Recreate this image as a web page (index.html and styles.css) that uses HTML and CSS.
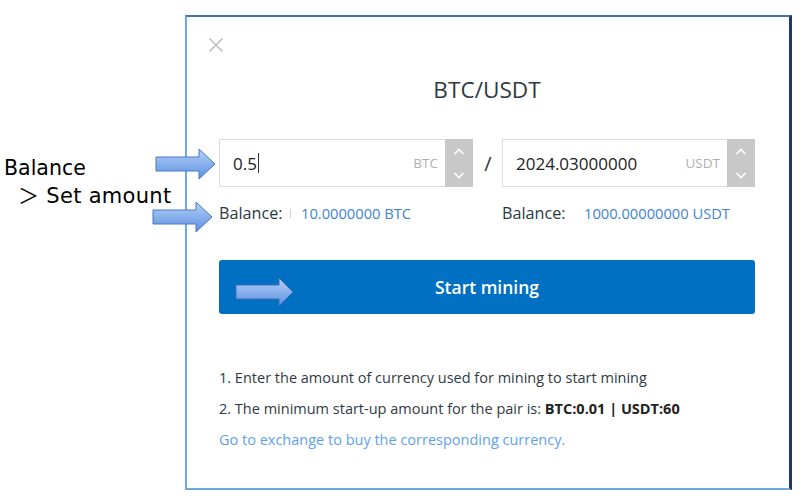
FILE: index.html
```html
<!DOCTYPE html>
<html lang="en">
<head>
<meta charset="utf-8">
<title>BTC/USDT</title>
<link rel="stylesheet" href="styles.css">
</head>
<body>
<div class="page">
  <div class="annot-text">
    <div class="annot-line">Balance</div>
    <div class="annot-line annot-indent"><span class="gt">＞</span> Set amount</div>
  </div>
  <svg class="arrow arrow-1" width="62" height="32" viewBox="0 0 62 32"><defs><linearGradient id="ag1" x1="0" y1="0" x2="0" y2="1"><stop offset="0" stop-color="#b5d2f8"/><stop offset="1" stop-color="#5c8fe0"/></linearGradient></defs><path d="M1 9 H44 V1 L60 16 L44 31 V23 H1 Z" fill="url(#ag1)" stroke="#4a79c6" stroke-width="1"/></svg>
  <svg class="arrow arrow-2" width="62" height="32" viewBox="0 0 62 32"><defs><linearGradient id="ag2" x1="0" y1="0" x2="0" y2="1"><stop offset="0" stop-color="#b5d2f8"/><stop offset="1" stop-color="#5c8fe0"/></linearGradient></defs><path d="M1 9 H44 V1 L60 16 L44 31 V23 H1 Z" fill="url(#ag2)" stroke="#4a79c6" stroke-width="1"/></svg>
  <svg class="arrow arrow-3" width="60" height="32" viewBox="0 0 60 32"><defs><linearGradient id="ag3" x1="0" y1="0" x2="0" y2="1"><stop offset="0" stop-color="#b5d2f8"/><stop offset="1" stop-color="#5c8fe0"/></linearGradient></defs><path d="M1 8 H44 V1 L58 15 L44 29 V22 H1 Z" fill="url(#ag3)" stroke="#3f6db5" stroke-width="1"/></svg>

  <div class="dialog">
    <button class="close" aria-label="Close"><svg width="16" height="16" viewBox="0 0 16 16"><path d="M1.5 1.5 L14.5 14.5 M14.5 1.5 L1.5 14.5" stroke="#bdbdbd" stroke-width="1.6" fill="none"/></svg></button>
    <h1 class="title">BTC/USDT</h1>
    <div class="pair">
      <div class="field">
        <div class="field-input"><span class="val">0.5</span><span class="caret"></span><span class="unit">BTC</span></div>
        <div class="spin"><svg width="28" height="46" viewBox="0 0 28 46"><path d="M9.5 14 L14 9.5 L18.5 14" stroke="#fff" stroke-width="1.6" fill="none"/><path d="M9.5 33 L14 37.5 L18.5 33" stroke="#fff" stroke-width="1.6" fill="none"/></svg></div>
      </div>
      <span class="slash">/</span>
      <div class="field">
        <div class="field-input"><span class="val">2024.03000000</span><span class="unit">USDT</span></div>
        <div class="spin"><svg width="28" height="46" viewBox="0 0 28 46"><path d="M9.5 14 L14 9.5 L18.5 14" stroke="#fff" stroke-width="1.6" fill="none"/><path d="M9.5 33 L14 37.5 L18.5 33" stroke="#fff" stroke-width="1.6" fill="none"/></svg></div>
      </div>
      <div class="bal"><span class="lbl">Balance:</span><span class="tick"></span><span class="amt">10.0000000 BTC</span></div>
      <span></span>
      <div class="bal"><span class="lbl">Balance:</span><span class="amt">1000.00000000 USDT</span></div>
    </div>
    <button class="start">Start mining</button>
    <div class="notes">
      <p>1. Enter the amount of currency used for mining to start mining</p>
      <p>2. The minimum start-up amount for the pair is: <b>BTC:0.01 | USDT:60</b></p>
      <p><a class="link" href="#">Go to exchange to buy the corresponding currency.</a></p>
    </div>
  </div>
</div>
</body>
</html>
```

FILE: styles.css
```css
* { box-sizing: border-box; }
html, body { margin: 0; padding: 0; background: #fff; }
body { font-family: "Open Sans", "Noto Sans", sans-serif; color: #303a44; }

.page {
  position: relative;
  width: 799px;
  height: 500px;
  padding: 15px 0 0 185px;
}

.annot-text {
  position: absolute;
  left: 4px;
  top: 155px;
  font-family: "DejaVu Sans", "Noto Sans CJK JP", sans-serif;
  font-size: 20.5px;
  line-height: 26px;
  color: #000;
}
.annot-indent { padding-left: 14px; font-size: 21px; letter-spacing: 0.3px; }
.gt { font-family: "Noto Sans CJK JP", sans-serif; }

.arrow { position: absolute; z-index: 2; }
.arrow-1 { left: 155px; top: 148px; }
.arrow-2 { left: 152px; top: 201px; }
.arrow-3 { left: 235px; top: 277px; }

.dialog {
  position: relative;
  width: 607px;
  height: 475px;
  border: 2px solid #6ea8de;
  border-top-color: #3b77b6;
  border-right: 3px solid #1d3b63;
  padding: 58px 34px 0 32px;
}

.close {
  position: absolute;
  left: 21px;
  top: 20px;
  width: 16px;
  height: 16px;
  padding: 0;
  border: 0;
  background: none;
  display: flex;
}

.title {
  margin: 0;
  font-size: 22.6px;
  font-weight: 400;
  line-height: 30px;
  text-align: center;
  color: #2f3a44;
}

.pair {
  margin-top: 34px;
  display: grid;
  grid-template-columns: 254px 29px 253px;
  row-gap: 15px;
}

.field {
  display: flex;
  height: 48px;
  border: 1px solid #dcdcdc;
  border-right: 0;
}
.field-input {
  flex: 1;
  display: flex;
  align-items: center;
  padding: 0 7px 0 13px;
}
.val { font-size: 17px; color: #222; }
.caret {
  width: 1px;
  height: 20px;
  background: #333;
  margin-left: 1px;
}
.unit {
  margin-left: auto;
  font-size: 13.5px;
  color: #b0b0b0;
}
.spin {
  width: 28px;
  margin: -1px 0;
  background: #c8c8c8;
  display: flex;
  align-items: center;
}

.slash {
  display: flex;
  align-items: center;
  justify-content: center;
  font-size: 20px;
  color: #333;
  padding-left: 1px;
}

.bal {
  display: flex;
  align-items: center;
  height: 22px;
}
.lbl { font-size: 16.2px; color: #2b3844; width: 82px; flex: none; }
.tick {
  width: 1px;
  height: 9px;
  background: #d0d0d0;
  margin-left: -11px;
  margin-right: 10px;
}
.amt { font-size: 14.7px; color: #3c84d6; }

.start {
  display: block;
  width: 536px;
  height: 54px;
  margin-top: 36px;
  border: 0;
  border-radius: 3px;
  background: #0071c2;
  color: #fff;
  font-family: "Open Sans", sans-serif;
  font-size: 17.5px;
  font-weight: 600;
}

.notes {
  margin-top: 48px;
  font-size: 14.5px;
  color: #303a44;
}
.notes p { margin: 0; line-height: 31px; }
.notes b { font-weight: 700; color: #222; }
.link { color: #5f9ff0; text-decoration: none; }
```
